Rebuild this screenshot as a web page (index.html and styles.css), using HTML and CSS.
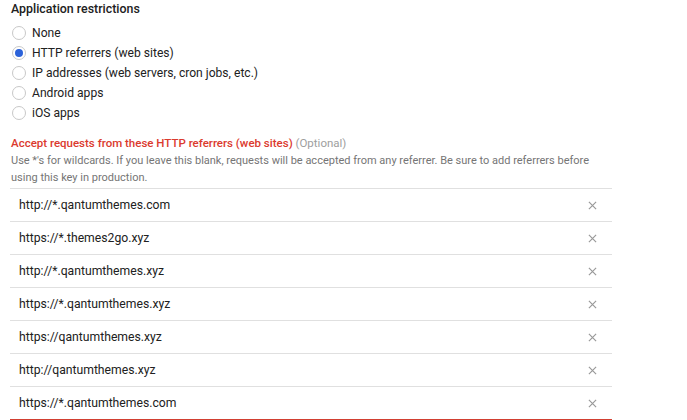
FILE: index.html
```html
<!DOCTYPE html>
<html>
<head>
<meta charset="utf-8">
<link rel="stylesheet" href="styles.css">
</head>
<body>
<div class="page">
  <div class="title">Application restrictions</div>
  <div class="radios">
    <div class="radio"><span class="circle"></span><span class="label">None</span></div>
    <div class="radio"><span class="circle checked"></span><span class="label">HTTP referrers (web sites)</span></div>
    <div class="radio"><span class="circle"></span><span class="label">IP addresses (web servers, cron jobs, etc.)</span></div>
    <div class="radio"><span class="circle"></span><span class="label">Android apps</span></div>
    <div class="radio"><span class="circle"></span><span class="label">iOS apps</span></div>
  </div>
  <div class="heading"><span class="red">Accept requests from these HTTP referrers (web sites)</span> <span class="opt">(Optional)</span></div>
  <div class="desc">Use *'s for wildcards. If you leave this blank, requests will be accepted from any referrer. Be sure to add referrers before using this key in production.</div>
  <div class="list">
    <div class="row"><span class="url">http://*.qantumthemes.com</span><svg class="x" viewBox="0 0 10 10"><path d="M1 1L9 9M9 1L1 9"/></svg></div>
    <div class="row"><span class="url">https://*.themes2go.xyz</span><svg class="x" viewBox="0 0 10 10"><path d="M1 1L9 9M9 1L1 9"/></svg></div>
    <div class="row"><span class="url">http://*.qantumthemes.xyz</span><svg class="x" viewBox="0 0 10 10"><path d="M1 1L9 9M9 1L1 9"/></svg></div>
    <div class="row"><span class="url">https://*.qantumthemes.xyz</span><svg class="x" viewBox="0 0 10 10"><path d="M1 1L9 9M9 1L1 9"/></svg></div>
    <div class="row"><span class="url">https://qantumthemes.xyz</span><svg class="x" viewBox="0 0 10 10"><path d="M1 1L9 9M9 1L1 9"/></svg></div>
    <div class="row"><span class="url">http://qantumthemes.xyz</span><svg class="x" viewBox="0 0 10 10"><path d="M1 1L9 9M9 1L1 9"/></svg></div>
    <div class="row last"><span class="url">https://*.qantumthemes.com</span><svg class="x" viewBox="0 0 10 10"><path d="M1 1L9 9M9 1L1 9"/></svg></div>
  </div>
</div>
</body>
</html>
```
FILE: styles.css
```css
html, body {
  margin: 0;
  padding: 0;
  background: #fff;
}
body {
  font-family: Roboto, "Liberation Sans", Arial, sans-serif;
  color: #212121;
  overflow: hidden;
}
.page {
  padding: 1px 75px 0 11px;
}
.title {
  font-size: 12.4px;
  font-weight: 500;
  line-height: 16px;
  color: #212121;
}
.radios {
  display: flex;
  flex-direction: column;
  padding-top: 6px;
}
.radio {
  display: flex;
  align-items: center;
  height: 20px;
  font-size: 12.1px;
}
.circle {
  box-sizing: border-box;
  width: 14px;
  height: 14px;
  border: 1px solid #c8c8c8;
  border-radius: 50%;
  margin-left: 1px;
  margin-right: 6px;
  display: flex;
  align-items: center;
  justify-content: center;
}
.circle.checked::after {
  content: "";
  width: 8px;
  height: 8px;
  border-radius: 50%;
  background: #2b62d9;
}
.label {
  color: #212121;
}
.heading {
  margin-top: 13px;
  font-size: 11.5px;
  line-height: 15px;
}
.red {
  color: #db3a2e;
  font-weight: 500;
}
.opt {
  color: #9e9e9e;
}
.desc {
  font-size: 11px;
  line-height: 17px;
  color: #757575;
  margin-top: 1px;
  width: 580px;
}
.list {
  margin-top: 2px;
  margin-left: -1px;
  width: 602px;
  border-top: 1px solid #e0e0e0;
}
.row {
  height: 32px;
  border-bottom: 1px solid #e0e0e0;
  display: flex;
  align-items: center;
  justify-content: space-between;
  padding: 0 15px 0 9px;
  font-size: 12.2px;
}
.row.last {
  border-bottom: 2px solid #d23f31;
}
.url {
  color: #212121;
}
.x {
  width: 9px;
  height: 9px;
  stroke: #999;
  stroke-width: 1.3;
  fill: none;
}
```
